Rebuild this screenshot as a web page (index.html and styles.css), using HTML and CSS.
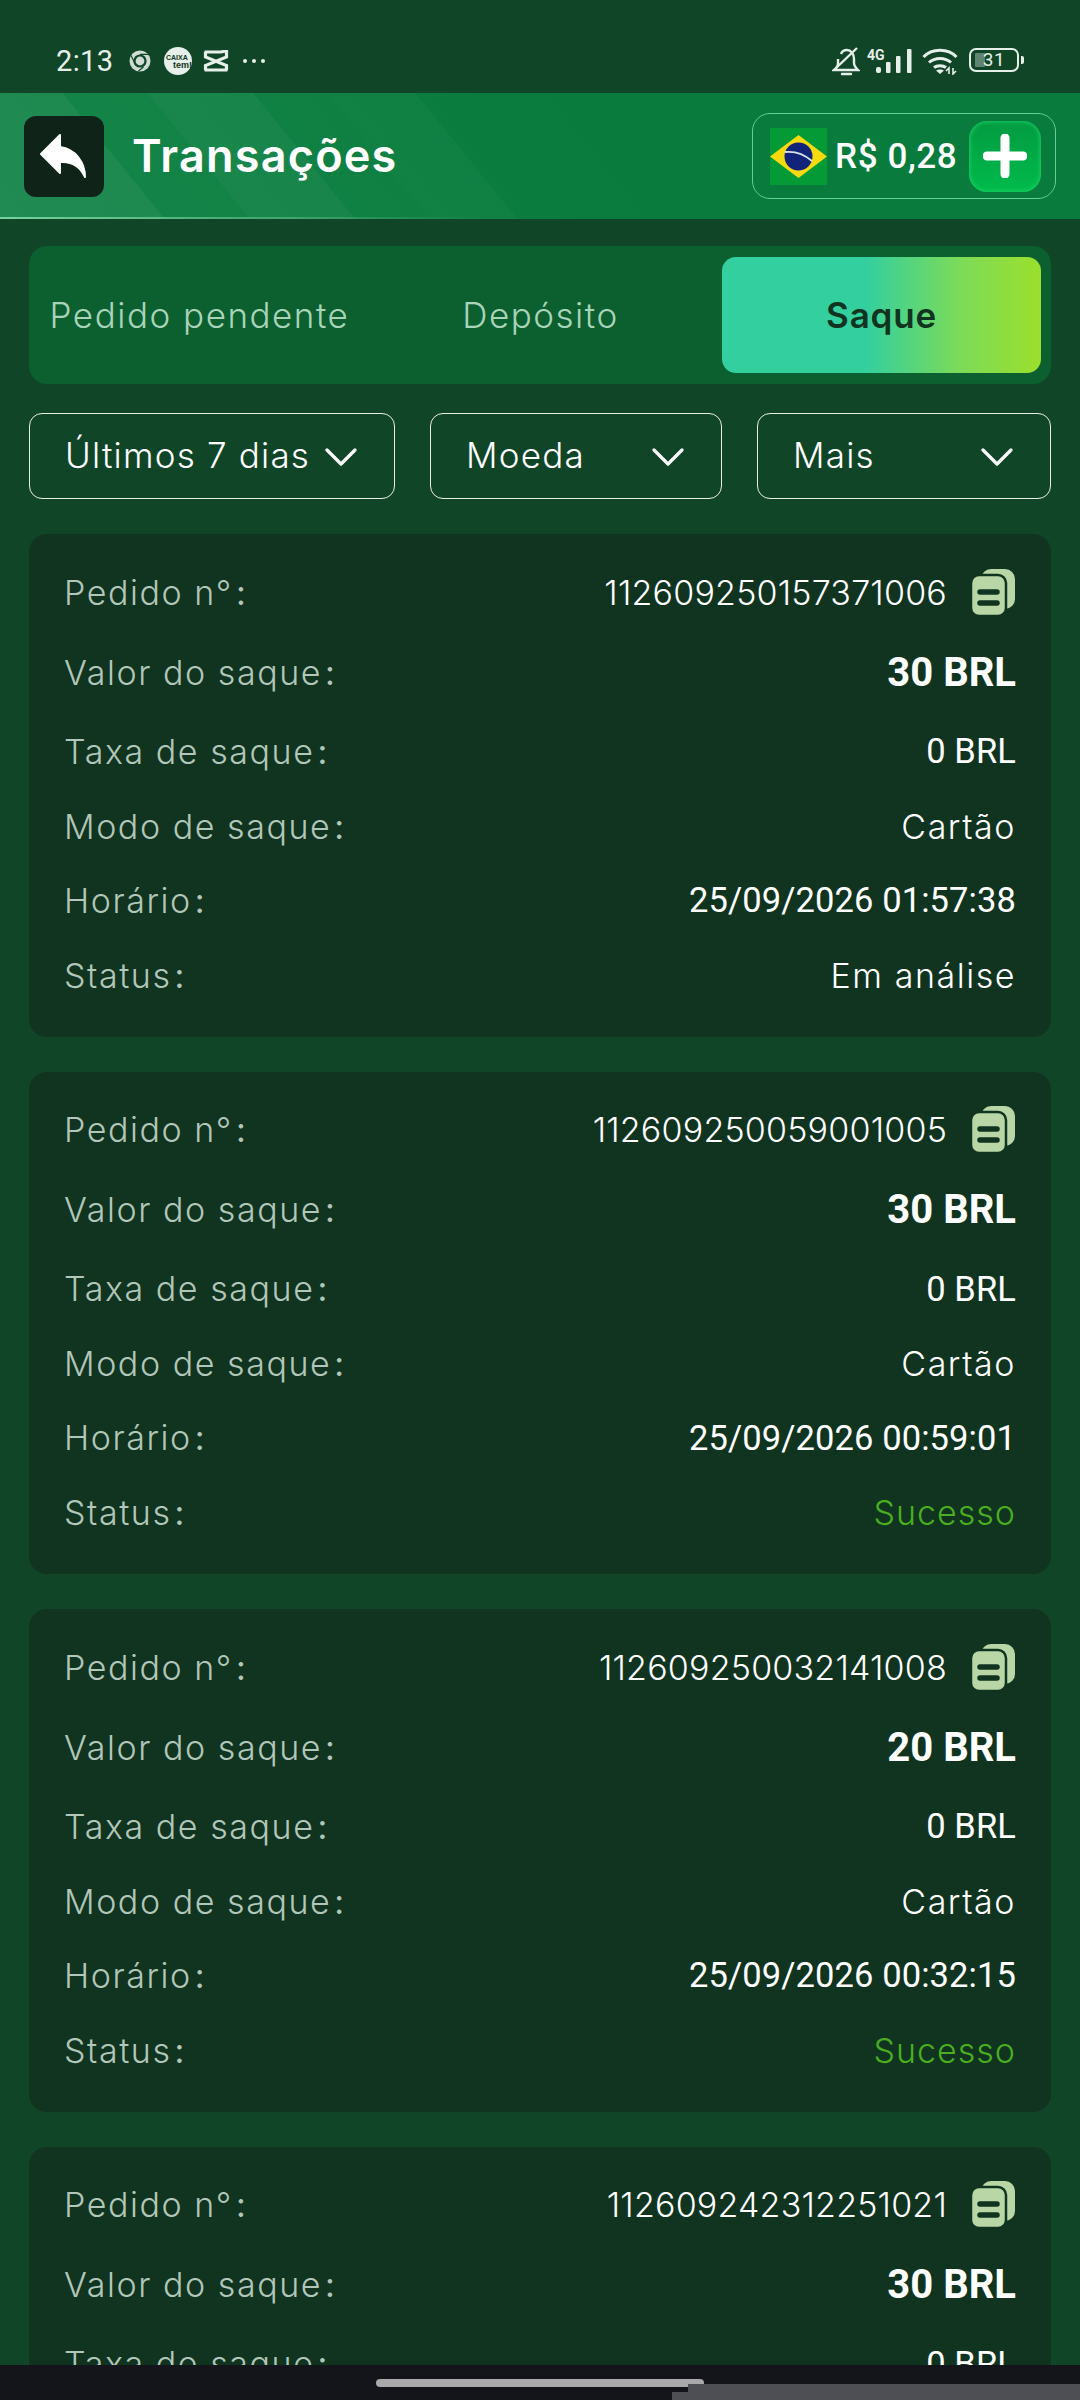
FILE: index.html
```html
<!DOCTYPE html>
<html lang="pt-BR">
<head>
    <meta charset="UTF-8">
    <meta name="viewport" content="width=device-width, initial-scale=1.0">
    <title>Transações</title>
    <link rel="stylesheet" href="styles.css">
</head>
<body>
    <div class="page">
        <div class="statusbar">
            <div class="status-left">
                <span class="clock">2:13</span>
                <svg class="ic-chrome" width="22" height="22" viewBox="0 0 22 22">
                    <circle cx="11" cy="11" r="10.5" fill="#cfdcd3"/>
                    <circle cx="11" cy="11" r="6.6" fill="#114528"/>
                    <circle cx="11" cy="11" r="4.4" fill="#cfdcd3"/>
                    <path d="M11 4.4H20M6 13.5L2 5.5M14.5 17L9.5 21" stroke="#114528" stroke-width="1.2" fill="none"/>
                </svg>
                <svg class="ic-caixa" width="28" height="28" viewBox="0 0 28 28">
                    <circle cx="14" cy="14" r="14" fill="#e6efe9"/>
                    <text x="2" y="13" class="caixa-a">CAIXA</text>
                    <text x="9" y="21" class="caixa-b">tem!</text>
                </svg>
                <svg class="ic-capcut" width="26" height="22" viewBox="0 0 26 22">
                    <path d="M1.500 2H18L25 0.500M1.500 20H24.500M2.500 2V7L23.500 15.500V20M23.500 1V7L2.500 15.500V20" fill="none" stroke="#e6efe9" stroke-width="3.200"/>
                </svg>
                <span class="dots"><i></i><i></i><i></i></span>
            </div>
            <div class="status-right">
                <svg class="ic-bell" width="28" height="29" viewBox="0 0 28 29">
                    <path d="M9 7C10 4 12 3 15 3C19 3 22 7 22 12V16C22 19 24 21 26 23H2C5 21 6 19 6 16V12" fill="none" stroke="#e6efe9" stroke-width="2.400"/>
                    <path d="M2 23L25 1" stroke="#e6efe9" stroke-width="2.400"/>
                    <path d="M10 27H19" stroke="#e6efe9" stroke-width="2.400" stroke-linecap="round"/>
                </svg>
                <span class="net">
                    <span class="net-label">4G</span>
                    <svg width="36" height="24" viewBox="0 0 36 24">
                        <rect x="0" y="18" width="5" height="6" rx="2" fill="#e6efe9"/>
                        <rect x="10" y="13" width="4.500" height="11" rx="1" fill="#e6efe9"/>
                        <rect x="20" y="7" width="4.500" height="17" rx="1" fill="#e6efe9"/>
                        <rect x="31" y="0" width="4.500" height="24" rx="1" fill="#e6efe9"/>
                    </svg>
                </span>
                <svg class="ic-wifi" width="36" height="28" viewBox="0 0 36 28">
                    <g fill="none" stroke="#e6efe9" stroke-width="3">
                        <path d="M1.500 10C10 1 26 1 34.500 10"/>
                        <path d="M7 15.500C13 10 23 10 29 15.500"/>
                        <path d="M12 20.500C15 18 21 18 24 20.500"/>
                    </g>
                    <path d="M18 27L14 23.500C16 22 20 22 22 23.500Z" fill="#e6efe9"/>
                    <path d="M27 27V21L24 24M31 21V27L34 24" fill="none" stroke="#e6efe9" stroke-width="1.600"/>
                </svg>
                <span class="battery">
                    <span class="battery-body"><i class="battery-fill"></i><b>31</b></span>
                    <i class="battery-nub"></i>
                </span>
            </div>
        </div>

        <header class="topbar">
            <a class="back">
                <svg width="80" height="81" viewBox="0 0 80 81">
                    <path d="M17 38L36 19V31C52 33 61 47 61 61C56 50 48 45 36 46V57Z" fill="#fff" stroke="#fff" stroke-width="2" stroke-linejoin="round"/>
                </svg>
            </a>
            <h1>Transações</h1>
            <div class="balance">
                <svg class="flag" width="57" height="57" viewBox="0 0 57 57">
                    <rect width="57" height="57" fill="#049b37"/>
                    <path d="M0 28.500L28.500 7L57 28.500L28.500 50Z" fill="#f6d90f"/>
                    <circle cx="28.500" cy="28.500" r="14" fill="#12247a"/>
                    <path d="M15 24C24 23 34 26 42 33" fill="none" stroke="#d6e4ea" stroke-width="1.800"/>
                </svg>
                <span class="amount">R$ 0,28</span>
                <span class="plus">
                    <svg width="44" height="44" viewBox="0 0 44 44">
                        <path d="M22 4V40M4 22H40" stroke="#fff" stroke-width="9" stroke-linecap="round"/>
                    </svg>
                </span>
            </div>
        </header>

        <main class="content">
            <div class="tabs">
                <div class="tab">Pedido pendente</div>
                <div class="tab">Depósito</div>
                <div class="tab active">Saque</div>
            </div>

            <div class="filters">
                <div class="filter filter-date"><span>Últimos 7 dias</span><svg width="32" height="20" viewBox="0 0 32 20"><path d="M2 3L16 17L30 3" fill="none" stroke="#fff" stroke-width="3.200" stroke-linecap="round" stroke-linejoin="round"/></svg></div>
                <div class="filter filter-coin"><span>Moeda</span><svg width="32" height="20" viewBox="0 0 32 20"><path d="M2 3L16 17L30 3" fill="none" stroke="#fff" stroke-width="3.200" stroke-linecap="round" stroke-linejoin="round"/></svg></div>
                <div class="filter filter-more"><span>Mais</span><svg width="32" height="20" viewBox="0 0 32 20"><path d="M2 3L16 17L30 3" fill="none" stroke="#fff" stroke-width="3.200" stroke-linecap="round" stroke-linejoin="round"/></svg></div>
            </div>

            <div class="card">
                <div class="row"><span class="label">Pedido n°<i>:</i></span><span class="value order">112609250157371006<svg class="copy" width="44" height="47" viewBox="0 0 44 47"><rect x="10" y="0" width="34" height="40" rx="10" fill="#b9d7a6"/><rect x="0" y="6" width="35" height="41" rx="8" fill="#b9d7a6" stroke="#103420" stroke-width="2.500"/><path d="M9 23H26M9 34H26" stroke="#103420" stroke-width="5.500" stroke-linecap="round"/></svg></span></div>
                <div class="row"><span class="label">Valor do saque<i>:</i></span><span class="value num strong">30 BRL</span></div>
                <div class="row"><span class="label">Taxa de saque<i>:</i></span><span class="value num">0 BRL</span></div>
                <div class="row"><span class="label">Modo de saque<i>:</i></span><span class="value">Cartão</span></div>
                <div class="row"><span class="label">Horário<i>:</i></span><span class="value num">25/09/2026 01:57:38</span></div>
                <div class="row"><span class="label">Status<i>:</i></span><span class="value">Em análise</span></div>
            </div>

            <div class="card">
                <div class="row"><span class="label">Pedido n°<i>:</i></span><span class="value order">112609250059001005<svg class="copy" width="44" height="47" viewBox="0 0 44 47"><rect x="10" y="0" width="34" height="40" rx="10" fill="#b9d7a6"/><rect x="0" y="6" width="35" height="41" rx="8" fill="#b9d7a6" stroke="#103420" stroke-width="2.500"/><path d="M9 23H26M9 34H26" stroke="#103420" stroke-width="5.500" stroke-linecap="round"/></svg></span></div>
                <div class="row"><span class="label">Valor do saque<i>:</i></span><span class="value num strong">30 BRL</span></div>
                <div class="row"><span class="label">Taxa de saque<i>:</i></span><span class="value num">0 BRL</span></div>
                <div class="row"><span class="label">Modo de saque<i>:</i></span><span class="value">Cartão</span></div>
                <div class="row"><span class="label">Horário<i>:</i></span><span class="value num">25/09/2026 00:59:01</span></div>
                <div class="row"><span class="label">Status<i>:</i></span><span class="value success">Sucesso</span></div>
            </div>

            <div class="card">
                <div class="row"><span class="label">Pedido n°<i>:</i></span><span class="value order">112609250032141008<svg class="copy" width="44" height="47" viewBox="0 0 44 47"><rect x="10" y="0" width="34" height="40" rx="10" fill="#b9d7a6"/><rect x="0" y="6" width="35" height="41" rx="8" fill="#b9d7a6" stroke="#103420" stroke-width="2.500"/><path d="M9 23H26M9 34H26" stroke="#103420" stroke-width="5.500" stroke-linecap="round"/></svg></span></div>
                <div class="row"><span class="label">Valor do saque<i>:</i></span><span class="value num strong">20 BRL</span></div>
                <div class="row"><span class="label">Taxa de saque<i>:</i></span><span class="value num">0 BRL</span></div>
                <div class="row"><span class="label">Modo de saque<i>:</i></span><span class="value">Cartão</span></div>
                <div class="row"><span class="label">Horário<i>:</i></span><span class="value num">25/09/2026 00:32:15</span></div>
                <div class="row"><span class="label">Status<i>:</i></span><span class="value success">Sucesso</span></div>
            </div>

            <div class="card">
                <div class="row"><span class="label">Pedido n°<i>:</i></span><span class="value order">112609242312251021<svg class="copy" width="44" height="47" viewBox="0 0 44 47"><rect x="10" y="0" width="34" height="40" rx="10" fill="#b9d7a6"/><rect x="0" y="6" width="35" height="41" rx="8" fill="#b9d7a6" stroke="#103420" stroke-width="2.500"/><path d="M9 23H26M9 34H26" stroke="#103420" stroke-width="5.500" stroke-linecap="round"/></svg></span></div>
                <div class="row"><span class="label">Valor do saque<i>:</i></span><span class="value num strong">30 BRL</span></div>
                <div class="row"><span class="label">Taxa de saque<i>:</i></span><span class="value num">0 BRL</span></div>
            </div>
        </main>

        <div class="navbar">
            <i class="home-pill"></i>
            <i class="glitch glitch-top"></i>
            <i class="glitch glitch-low"></i>
        </div>
    </div>
</body>
</html>
```

FILE: styles.css
```css
* {
    box-sizing: border-box;
}
body {
    margin: 0;
    font-family: Inter, "Open Sans", sans-serif;
    background-color: #114528;
    color: #fff;
}
.page {
    width: 1080px;
    height: 2400px;
    display: flex;
    flex-direction: column;
    overflow: hidden;
}

/* status bar */
.statusbar {
    height: 93px;
    flex: none;
    display: flex;
    justify-content: space-between;
    padding: 47px 56px 0 56px;
    color: #e6efe9;
}
.status-left, .status-right {
    display: flex;
    align-items: flex-start;
}
.clock {
    font-family: Roboto, sans-serif;
    font-size: 29px;
    line-height: 28px;
    letter-spacing: 0.4px;
    width: 73px;
}
.ic-chrome {
    margin-top: 3px;
}
.ic-caixa {
    margin-left: 13px;
}
.caixa-a {
    font: 800 7px "Liberation Sans", sans-serif;
    fill: #103420;
}
.caixa-b {
    font: 800 9px "Liberation Sans", sans-serif;
    fill: #103420;
}
.ic-capcut {
    margin: 3px 0 0 11px;
}
.dots {
    display: flex;
    gap: 5px;
    margin: 12px 0 0 14px;
}
.dots i {
    width: 4px;
    height: 4px;
    border-radius: 50%;
    background-color: #e6efe9;
}
.net {
    position: relative;
    display: block;
    width: 45px;
    height: 26px;
    margin: 2px 0 0 7px;
    padding: 0 0 0 9px;
}
.net svg {
    display: block;
}
.net-label {
    position: absolute;
    left: 0;
    top: -2px;
    font: 700 14px/16px Roboto, sans-serif;
}
.ic-wifi {
    margin-left: 10px;
}
.battery {
    display: flex;
    align-items: center;
    margin: 1px 0 0 11px;
}
.battery-body {
    position: relative;
    width: 50px;
    height: 24px;
    border: 2px solid #e6efe9;
    border-radius: 7px;
    display: flex;
    justify-content: center;
    align-items: center;
    overflow: hidden;
}
.battery-body b {
    position: relative;
    font: 400 19px/20px Roboto, sans-serif;
    letter-spacing: 0.5px;
}
.battery-fill {
    position: absolute;
    left: 4px;
    top: 3px;
    bottom: 3px;
    width: 10px;
    background-color: #5d8570;
    border-radius: 1px;
}
.battery-nub {
    width: 3px;
    height: 8px;
    margin-left: 2px;
    border-radius: 0 2px 2px 0;
    background-color: #e6efe9;
}

/* header */
.topbar {
    height: 126px;
    flex: none;
    display: flex;
    align-items: center;
    padding: 0 24px;
    background:
        linear-gradient(to right, #74d39f, rgba(116, 211, 159, 0) 45%) left bottom / 100% 2px no-repeat,
        linear-gradient(51deg, rgba(255, 255, 255, 0.07) 0 128px, rgba(255, 255, 255, 0.025) 128px 194px, rgba(255, 255, 255, 0.05) 194px 276px, rgba(255, 255, 255, 0.015) 276px 334px, rgba(255, 255, 255, 0.025) 334px 402px, rgba(255, 255, 255, 0) 402px),
        linear-gradient(51deg, #0f8245, #097b3c 60%);
}
.back {
    width: 80px;
    height: 81px;
    flex: none;
    background-color: #0f2318;
    border-radius: 12px;
}
.back svg {
    display: block;
}
.topbar h1 {
    margin: -2px 0 0 28px;
    font-size: 45px;
    font-weight: 600;
    letter-spacing: 1.2px;
}
.balance {
    margin-left: auto;
    width: 304px;
    height: 86px;
    display: flex;
    align-items: center;
    padding-left: 17px;
    border: 1px solid #62cf96;
    border-radius: 18px;
}
.flag {
    flex: none;
}
.amount {
    margin-left: 8px;
    font-family: Roboto, sans-serif;
    font-size: 35px;
    font-weight: 500;
    letter-spacing: 0.6px;
    white-space: nowrap;
}
.plus {
    width: 72px;
    height: 71px;
    margin-left: auto;
    margin-right: 14px;
    flex: none;
    display: flex;
    justify-content: center;
    align-items: center;
    border-radius: 18px;
    background: linear-gradient(#039a41, #00bb4b);
    box-shadow: inset 0 0 4px 1px #17cf63;
}

/* content */
.content {
    flex: 1;
    overflow: hidden;
    padding: 27px 29px 0;
}
.tabs {
    height: 138px;
    display: grid;
    grid-template-columns: repeat(3, 319px);
    justify-content: space-between;
    padding: 11px 10px 11px 11px;
    background-color: #0c602f;
    border-radius: 18px;
}
.tab {
    display: flex;
    justify-content: center;
    align-items: center;
    font-size: 35px;
    letter-spacing: 1.5px;
    font-weight: 300;
    color: #a9d4ba;
    white-space: nowrap;
}
.tab.active {
    font-weight: 600;
    letter-spacing: 0.8px;
    color: #103420;
    border-radius: 14px;
    background: linear-gradient(90deg, #33cf9f 45%, #7ddb58 75%, #9bdf2c);
}
.filters {
    display: flex;
    gap: 35px;
    margin: 29px 0 35px;
}
.filter {
    height: 86px;
    display: flex;
    justify-content: space-between;
    align-items: center;
    padding: 0 37px 0 35px;
    border: 1px solid #e8efe9;
    border-radius: 13px;
    font-size: 35px;
    font-weight: 300;
    letter-spacing: 1.2px;
}
.filter span {
    margin-top: -2px;
}
.filter svg {
    flex: none;
    margin-top: 2px;
}
.filter-date {
    width: 366px;
}
.filter-coin {
    width: 292px;
}
.filter-more {
    width: 294px;
}
.card {
    display: grid;
    grid-template-rows: 50px 50px 48px 42px 46px 44px;
    row-gap: 30px;
    padding: 33px 35px 39.500px;
    margin-bottom: 35px;
    background-color: #103420;
    border-radius: 18px;
}
.row {
    display: flex;
    justify-content: space-between;
    align-items: center;
    font-size: 34px;
    font-weight: 300;
    letter-spacing: 1.550px;
    white-space: nowrap;
}
.label {
    color: #b2c6b9;
}
.label i {
    font-style: normal;
    font-weight: 400;
    margin-left: 3px;
}
.value {
    color: #fff;
    display: flex;
    align-items: center;
}
.order {
    letter-spacing: 0.2px;
}
.copy {
    margin: 0 1px 0 24px;
    flex: none;
}
.num {
    font-family: Roboto, sans-serif;
    font-size: 34.500px;
    font-weight: 380;
    letter-spacing: 0.1px;
}
.strong {
    font-size: 40px;
    font-weight: 700;
    letter-spacing: 0;
}
.success {
    color: #4aae1f;
    letter-spacing: 1px;
}

/* navigation bar */
.navbar {
    position: relative;
    height: 35px;
    flex: none;
    background-color: #13151a;
}
.home-pill {
    position: absolute;
    left: 376px;
    top: 14px;
    width: 328px;
    height: 8px;
    border-radius: 4px;
    background-color: #a9a9ab;
}
.glitch {
    position: absolute;
    right: 0;
    bottom: 0;
    background-color: #4e4f55;
}
.glitch-top {
    left: 688px;
    top: 19px;
}
.glitch-low {
    left: 672px;
    top: 27px;
}
```
